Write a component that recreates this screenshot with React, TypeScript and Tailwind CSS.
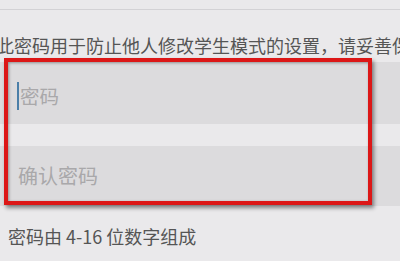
import React from 'react';

const font = { fontFamily: '"Noto Sans CJK SC", "Noto Sans", sans-serif' };

export default function App() {
  return (
    <div style={font} className="relative w-[400px] h-[261px] overflow-hidden bg-[#eae9eb]">
      <div className="h-[9px]" />
      <div className="h-px bg-[#d3d2d5]" />

      <p className="ml-[-4px] mt-[24px] h-[28px] whitespace-nowrap text-[18px] leading-[22px] text-[#555555]">
        此密码用于防止他人修改学生模式的设置，请妥善保管
      </p>

      {/* password */}
      <div className="flex h-[62px] items-center bg-[#dcdbdd] pl-[17px] pt-[6px]">
        <span className="mr-[1px] h-[28px] w-[2px] bg-[#4b7fa8]" />
        <span className="text-[19.5px] leading-none text-[#a9a8aa]">密码</span>
      </div>

      <div className="h-[22px]" />

      {/* confirm */}
      <div className="flex h-[60px] items-center bg-[#dcdbdd] pl-[18px]">
        <span className="text-[20px] leading-none text-[#a9a8aa]">确认密码</span>
      </div>

      <p className="ml-[8px] mt-[19px] whitespace-nowrap text-[18px] leading-[22px] text-[#555555]">
        密码由 4-16 位数字组成
      </p>

      {/* annotation frame */}
      <div className="pointer-events-none absolute left-[4px] top-[58px] h-[147px] w-[368px] border-[4px] border-[#dc1717] shadow-[2px_3px_4px_rgba(0,0,0,0.45),inset_1px_1px_3px_rgba(0,0,0,0.35)]" />
    </div>
  );
}
